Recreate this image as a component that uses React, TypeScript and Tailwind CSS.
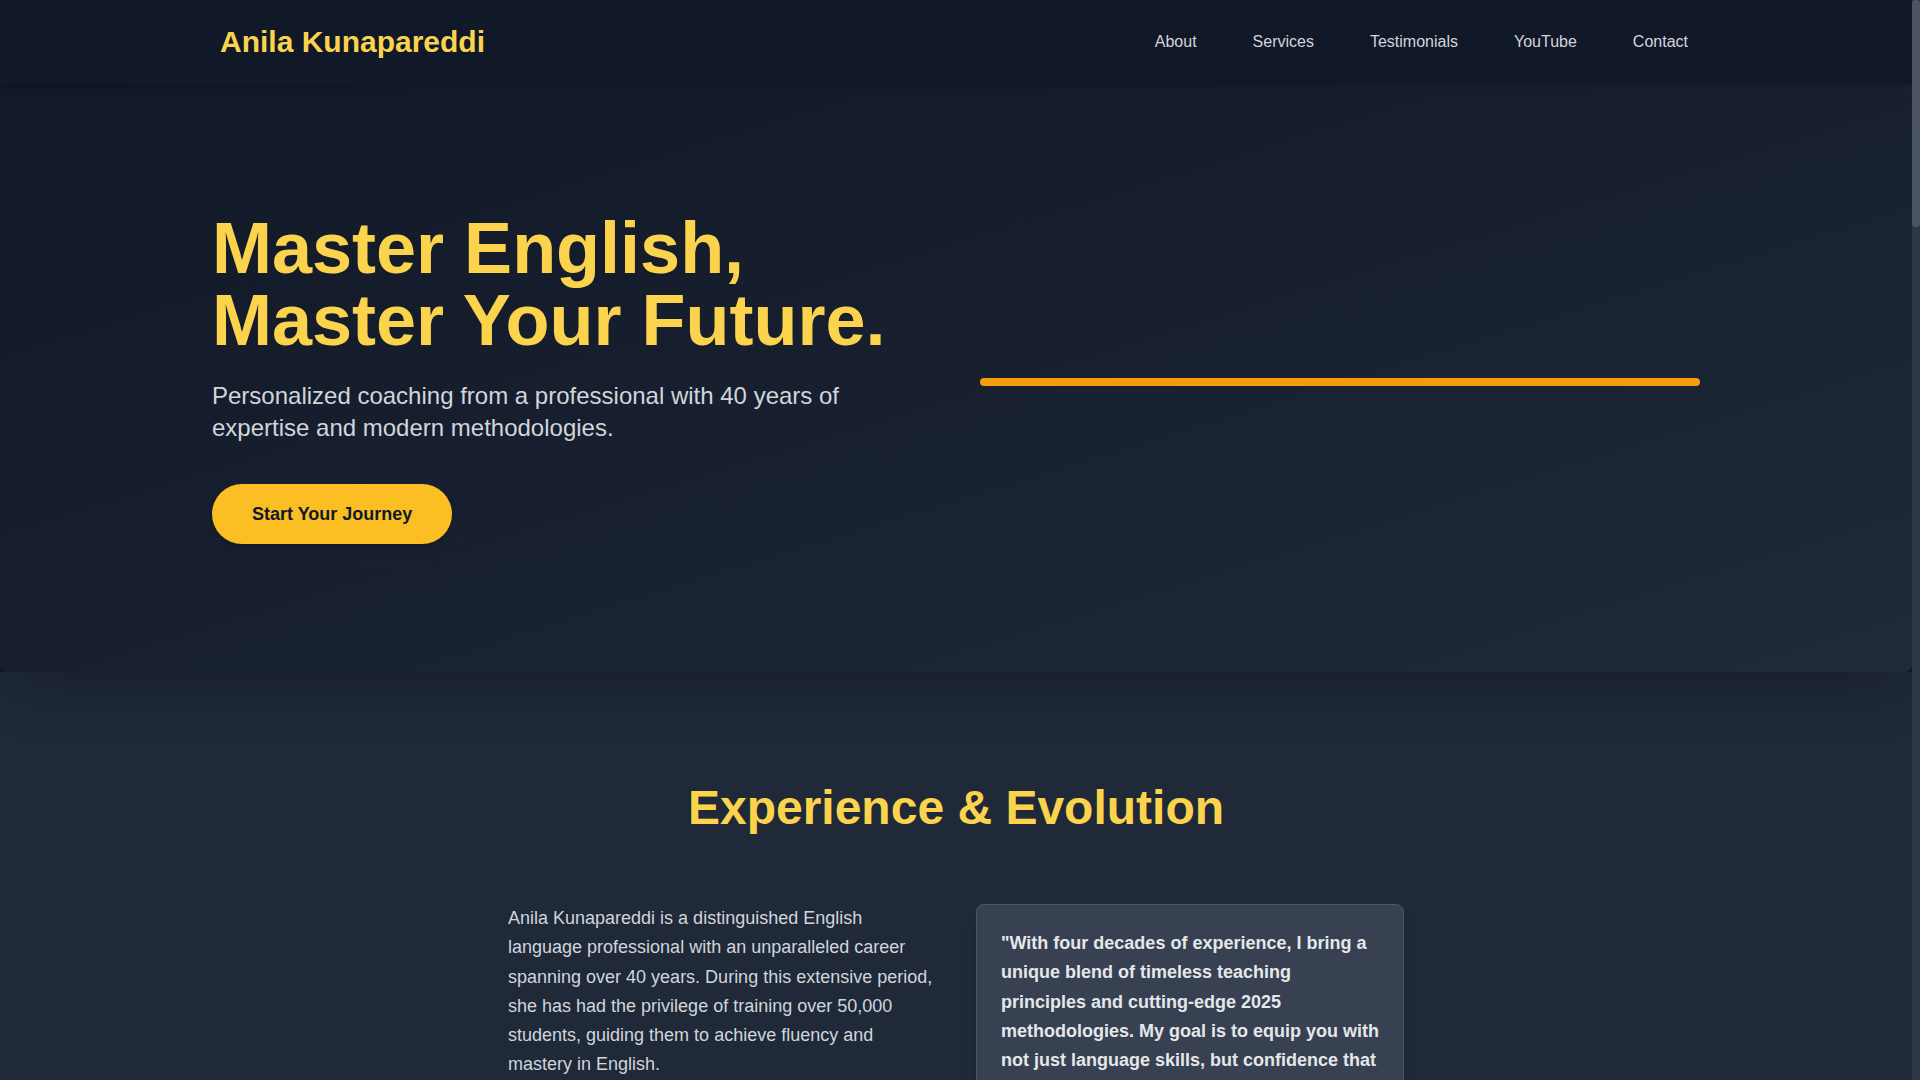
import React from "react";

const NAV = ["About", "Services", "Testimonials", "YouTube", "Contact"];

const SERVICES = [
  {
    title: "Spoken English",
    text: "Build fluency and clarity in everyday conversation with structured speaking practice and feedback.",
  },
  {
    title: "Business Communication",
    text: "Presentations, meetings, emails and negotiations – communicate with poise in a professional setting.",
  },
  {
    title: "Exam Preparation",
    text: "Targeted coaching for IELTS, TOEFL and other proficiency tests, with proven strategies and mock sessions.",
  },
  {
    title: "Grammar & Writing",
    text: "Strengthen the foundations of the language and learn to write with precision and style.",
  },
  {
    title: "Accent & Pronunciation",
    text: "Neutralise your accent and speak with natural rhythm, stress and intonation.",
  },
  {
    title: "Personal Mentoring",
    text: "One-on-one sessions shaped around your goals, your pace and your schedule.",
  },
];

const TESTIMONIALS = [
  {
    quote: "Madam's classes changed the way I speak. I cleared my interview with confidence.",
    name: "Ravi Kumar",
  },
  {
    quote: "Forty years of experience shows in every lesson. Patient, clear and inspiring.",
    name: "Sravani P.",
  },
  {
    quote: "The modern methods and constant encouragement helped me score 8 in IELTS.",
    name: "Mohammed Arif",
  },
];

function Header() {
  return (
    <header className="sticky top-0 z-50 bg-[#111827] shadow-md">
      <div className="container mx-auto px-8 py-6 flex items-center justify-between">
        <a href="#" className="text-3xl font-bold text-[#fcd34d]">
          Anila Kunapareddi
        </a>
        <nav className="flex items-center gap-12">
          {NAV.map((item) => (
            <a key={item} href={`#${item.toLowerCase()}`} className="px-1 text-base text-gray-300 hover:text-[#fcd34d]">
              {item}
            </a>
          ))}
        </nav>
      </div>
    </header>
  );
}

function Hero() {
  return (
    <section className="relative z-10 rounded-b-lg bg-gradient-to-br from-[#111827] to-[#1f2937] shadow-2xl">
      <div className="container mx-auto px-6 py-32 grid grid-cols-2 gap-12 items-center">
        <div>
          <h1 className="text-7xl font-bold leading-none text-[#fcd34d] mb-6">
            Master English, Master Your Future.
          </h1>
          <p className="text-2xl text-gray-300">
            Personalized coaching from a professional with 40 years of expertise and modern methodologies.
          </p>
          <a
            href="#contact"
            className="inline-block mt-10 px-10 py-4 rounded-full bg-[#fbbf24] text-lg font-bold text-[#111827] shadow-lg"
          >
            Start Your Journey
          </a>
        </div>
        <div className="flex flex-col justify-center">
          <div className="mt-2 h-2 w-full rounded-full bg-[#f59e0b]" />
        </div>
      </div>
    </section>
  );
}

function About() {
  return (
    <section id="about" className="bg-[#1f2937] pt-28 pb-24">
      <h2 className="text-5xl font-bold leading-none text-center text-[#fcd34d] mb-18">
        Experience &amp; Evolution
      </h2>
      <div className="max-w-4xl mx-auto grid grid-cols-2 gap-10 items-start">
        <div className="text-lg leading-relaxed text-gray-300 space-y-6">
          <p>
            Anila Kunapareddi is a distinguished English language professional with an unparalleled career spanning
            over 40 years. During this extensive period, she has had the privilege of training over 50,000 students,
            guiding them to achieve fluency and mastery in English.
          </p>
          <p>
            Her journey has evolved with the times, blending classroom wisdom with the latest digital tools so that
            every learner gets an experience that is personal, practical and up to date.
          </p>
        </div>
        <div className="rounded-lg border border-[#4b5563] bg-[#374151] p-6 shadow-lg">
          <p className="text-lg leading-relaxed font-bold text-gray-200">
            "With four decades of experience, I bring a unique blend of timeless teaching principles and cutting-edge
            2025 methodologies. My goal is to equip you with not just language skills, but confidence that lasts a
            lifetime."
          </p>
          <p className="mt-4 text-base text-[#fcd34d]">– Anila Kunapareddi</p>
        </div>
      </div>
    </section>
  );
}

function Services() {
  return (
    <section id="services" className="bg-[#111827] py-28">
      <h2 className="text-5xl font-bold leading-none text-center text-[#fcd34d] mb-18">Services</h2>
      <div className="container mx-auto px-6 grid grid-cols-3 gap-10">
        {SERVICES.map((s) => (
          <div key={s.title} className="rounded-lg border border-[#374151] bg-[#1f2937] p-8 shadow-lg">
            <div className="h-1 w-12 rounded-full bg-[#f59e0b] mb-6" />
            <h3 className="text-2xl font-bold text-gray-100 mb-4">{s.title}</h3>
            <p className="text-lg leading-relaxed text-gray-300">{s.text}</p>
          </div>
        ))}
      </div>
    </section>
  );
}

function Testimonials() {
  return (
    <section id="testimonials" className="bg-[#1f2937] py-28">
      <h2 className="text-5xl font-bold leading-none text-center text-[#fcd34d] mb-18">What Students Say</h2>
      <div className="container mx-auto px-6 grid grid-cols-3 gap-10">
        {TESTIMONIALS.map((t) => (
          <div key={t.name} className="rounded-lg border border-[#4b5563] bg-[#374151] p-8 shadow-lg min-h-72">
            <p className="text-lg leading-relaxed font-bold text-gray-200">"{t.quote}"</p>
            <p className="mt-6 text-base text-[#fcd34d]">– {t.name}</p>
          </div>
        ))}
      </div>
    </section>
  );
}

function YouTube() {
  return (
    <section id="youtube" className="bg-[#111827] py-28">
      <h2 className="text-5xl font-bold leading-none text-center text-[#fcd34d] mb-6">Learn on YouTube</h2>
      <p className="text-center text-xl text-gray-300 mb-16">Free lessons, tips and practice sessions every week.</p>
      <div className="container mx-auto px-6 grid grid-cols-3 gap-10">
        {[1, 2, 3].map((n) => (
          <div key={n} className="rounded-lg bg-[#1f2937] overflow-hidden shadow-lg">
            <div className="aspect-video bg-[#374151] flex items-center justify-center">
              <div className="w-16 h-11 rounded-xl bg-[#ef4444] flex items-center justify-center">
                <div className="w-0 h-0 border-y-8 border-y-transparent border-l-[14px] border-l-white ml-1" />
              </div>
            </div>
            <div className="p-6 text-lg font-bold text-gray-200">English Lesson {n}</div>
          </div>
        ))}
      </div>
    </section>
  );
}

function Contact() {
  return (
    <section id="contact" className="bg-[#1f2937] py-28">
      <h2 className="text-5xl font-bold leading-none text-center text-[#fcd34d] mb-18">Get in Touch</h2>
      <form className="max-w-2xl mx-auto flex flex-col gap-6">
        <input placeholder="Your Name" className="rounded-lg border border-[#4b5563] bg-[#374151] px-5 py-4 text-lg text-gray-200 placeholder:text-gray-400 outline-none" />
        <input placeholder="Email Address" className="rounded-lg border border-[#4b5563] bg-[#374151] px-5 py-4 text-lg text-gray-200 placeholder:text-gray-400 outline-none" />
        <textarea rows={6} placeholder="Your Message" className="rounded-lg border border-[#4b5563] bg-[#374151] px-5 py-4 text-lg text-gray-200 placeholder:text-gray-400 outline-none" />
        <button type="button" className="self-start px-10 py-4 rounded-full bg-[#fbbf24] text-lg font-bold text-[#111827] shadow-lg">
          Send Message
        </button>
      </form>
    </section>
  );
}

// page scrollbar rail (headless hides the native one)
function ScrollRail() {
  return (
    <div aria-hidden className="fixed top-0 right-0 z-[60] h-screen w-2 bg-[#2d3748]">
      <div className="h-[227px] w-full rounded-full bg-[#4b5563]" />
    </div>
  );
}

export default function App() {
  return (
    <div className="min-h-screen pr-2 bg-[#111827] font-['Liberation_Sans',Arial,sans-serif]">
      <Header />
      <Hero />
      <About />
      <Services />
      <Testimonials />
      <YouTube />
      <Contact />
      <footer className="bg-[#111827] py-10 text-center text-base text-gray-400">
        © 2025 Anila Kunapareddi. All rights reserved.
      </footer>
      <ScrollRail />
    </div>
  );
}
